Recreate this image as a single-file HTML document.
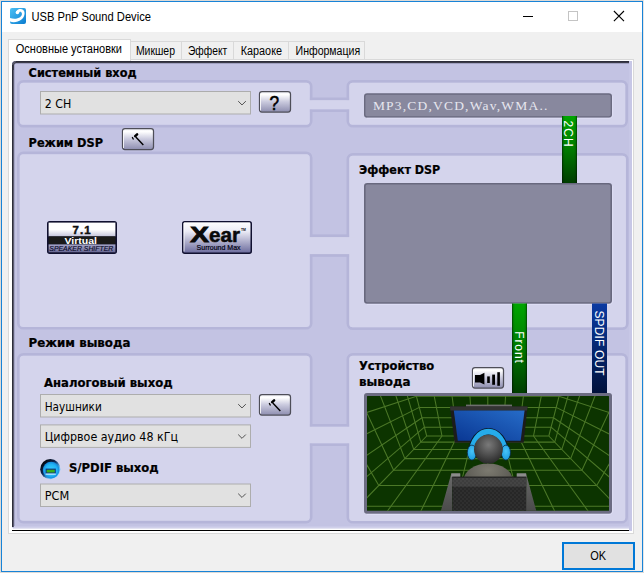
<!DOCTYPE html>
<html><head><meta charset="utf-8"><title>USB PnP Sound Device</title>
<style>
html,body{margin:0;padding:0;background:#f0f0f0;}
body{width:644px;height:573px;overflow:hidden;position:relative;font-family:"Liberation Sans",sans-serif;}
#win{position:absolute;left:0;top:0;width:644px;height:573px;background:#f0f0f0;overflow:hidden}
.edge{position:absolute;background:#1883d7}
#title{position:absolute;left:2px;top:2px;width:640px;height:30px;background:#fff}
#ttext{position:absolute;left:31px;top:9px;font-size:12px;line-height:14px;color:#000;white-space:nowrap;letter-spacing:0.1px}
.tab{position:absolute;top:41px;height:18px;box-sizing:border-box;border:1px solid #d9d9d9;border-bottom:none;border-left:none;background:#f0f0f0;font-size:12px;line-height:17px;color:#000;text-align:center;white-space:nowrap}
#tab0{left:8px;top:39px;width:123px;height:22px;background:#fff;border-left:1px solid #d9d9d9;line-height:19px}
#page{position:absolute;left:8px;top:59px;width:626px;height:475px;box-sizing:border-box;border:1px solid #d9d9d9;background:#fff}
#ok{position:absolute;left:562px;top:542px;width:73px;height:28px;box-sizing:border-box;border:2px solid #0078d7;background:#e1e1e1;font-size:12px;line-height:24px;text-align:center;color:#000}
svg text.bold{font-family:"DejaVu Sans Condensed","DejaVu Sans","Liberation Sans",sans-serif;font-weight:bold;font-size:13px;fill:#000;stroke:#000;stroke-width:0.22px}
svg text.reg{font-family:"DejaVu Sans Condensed","DejaVu Sans","Liberation Sans",sans-serif;font-size:13px;fill:#000}
svg .ui text{font-family:"Liberation Sans",sans-serif;font-size:12px;fill:#000}
svg text.vert{font-family:"Liberation Sans",sans-serif;font-size:12px;fill:#fff}
</style></head>
<body>
<div id="win">
<div id="title"></div>
<svg width="16" height="16" viewBox="0 0 16 16" style="position:absolute;left:10px;top:8px">
<defs><linearGradient id="ig" x1="0" y1="0" x2="1" y2="1"><stop offset="0" stop-color="#4cc0f4"/><stop offset="1" stop-color="#0a7cd0"/></linearGradient></defs>
<rect x="0" y="0" width="16" height="16" rx="2" fill="url(#ig)"/>
<path d="M0 13.6 C6 15.6 14.6 12.4 14.6 5 C14.6 1.6 11.6 0.5 9.4 1 C7.6 1.5 6.2 2.8 5.9 4.2 L8.6 5.2 C9.2 3.2 11.4 3 11.9 5.4 C12.4 8.8 7 12.2 0 10 Z" fill="#fff"/>
<circle cx="7.4" cy="4.5" r="1.75" fill="#fff"/>
</svg>
<svg width="140" height="30" viewBox="0 0 140 30" style="position:absolute;left:500px;top:2px">
<path d="M23 14.5 H33" stroke="#000" stroke-width="1"/>
<rect x="68.5" y="9.5" width="9" height="9" fill="none" stroke="#c4c4c4" stroke-width="1"/>
<path d="M113.9 9 L124 19.2 M124 9 L113.9 19.2" stroke="#000" stroke-width="1.1"/>
</svg>
<div id="page"></div>
<div class="tab" id="tab0"></div>
<div class="tab" style="left:131px;width:51px"></div>
<div class="tab" style="left:182px;width:52px"></div>
<div class="tab" style="left:234px;width:55px"></div>
<div class="tab" style="left:289px;width:76px"></div>
<div id="ok"></div>
<svg width="644" height="573" viewBox="0 0 644 573" style="position:absolute;left:0;top:0">
<defs>
<linearGradient id="btng" x1="0" y1="0" x2="0" y2="1"><stop offset="0" stop-color="#f0f0f6"/><stop offset="0.15" stop-color="#ffffff"/><stop offset="0.5" stop-color="#cacade"/><stop offset="1" stop-color="#8e8eb0"/></linearGradient>
<linearGradient id="grn" x1="0" y1="0" x2="0" y2="1"><stop offset="0" stop-color="#00a600"/><stop offset="0.5" stop-color="#007a00"/><stop offset="1" stop-color="#003c00"/></linearGradient>
<linearGradient id="grnh" x1="0" y1="0" x2="1" y2="0"><stop offset="0" stop-color="#000" stop-opacity="0.6"/><stop offset="0.09" stop-color="#000" stop-opacity="0.15"/><stop offset="0.2" stop-color="#000" stop-opacity="0"/><stop offset="0.8" stop-color="#000" stop-opacity="0"/><stop offset="0.91" stop-color="#000" stop-opacity="0.15"/><stop offset="1" stop-color="#000" stop-opacity="0.55"/></linearGradient>
<linearGradient id="blu" x1="0" y1="0" x2="0" y2="1"><stop offset="0" stop-color="#0b3aa2"/><stop offset="0.5" stop-color="#052670"/><stop offset="1" stop-color="#00103a"/></linearGradient>
<linearGradient id="scr" x1="0" y1="1" x2="1" y2="0"><stop offset="0" stop-color="#093692"/><stop offset="1" stop-color="#266cc8"/></linearGradient>
<radialGradient id="head" cx="0.5" cy="0.35" r="0.65"><stop offset="0" stop-color="#7a7a7a"/><stop offset="1" stop-color="#2a2a2a"/></radialGradient>
<radialGradient id="body" cx="0.5" cy="0.2" r="0.8"><stop offset="0" stop-color="#7c7a70"/><stop offset="1" stop-color="#4a4944"/></radialGradient>
<linearGradient id="logo2" x1="0" y1="0" x2="0" y2="1"><stop offset="0" stop-color="#ffffff"/><stop offset="0.3" stop-color="#ececf6"/><stop offset="1" stop-color="#6a6a9c"/></linearGradient>
<linearGradient id="logo1a" x1="0" y1="0" x2="0" y2="1"><stop offset="0" stop-color="#ffffff"/><stop offset="0.5" stop-color="#ffffff"/><stop offset="1" stop-color="#c4c4dc"/></linearGradient>
<linearGradient id="logo1b" x1="0" y1="0" x2="0" y2="1"><stop offset="0" stop-color="#a6a6ca"/><stop offset="1" stop-color="#686892"/></linearGradient>
<radialGradient id="spd" cx="0.5" cy="0.5" r="0.5"><stop offset="0" stop-color="#34d4ff"/><stop offset="0.7" stop-color="#22b4f4"/><stop offset="1" stop-color="#1488dc"/></radialGradient>
<linearGradient id="spdo" x1="0.15" y1="0.15" x2="0.85" y2="0.85"><stop offset="0" stop-color="#04060c"/><stop offset="0.4" stop-color="#0a2a5a"/><stop offset="0.75" stop-color="#58b8f0"/><stop offset="1" stop-color="#a0dcff"/></linearGradient>
<linearGradient id="rail" x1="0" y1="0" x2="0" y2="1"><stop offset="0" stop-color="#6a6a6a"/><stop offset="1" stop-color="#4a4a4a"/></linearGradient>
<pattern id="chk" width="4" height="4" patternUnits="userSpaceOnUse"><rect x="0" y="0" width="2" height="2" fill="#fff" opacity="0.035"/><rect x="2" y="2" width="2" height="2" fill="#fff" opacity="0.035"/></pattern>
<radialGradient id="cup" cx="0.5" cy="0.4" r="0.6"><stop offset="0" stop-color="#48c4f8"/><stop offset="1" stop-color="#1c9ce0"/></radialGradient>
<clipPath id="roomclip"><rect x="367" y="396" width="242" height="114.8" rx="0.5"/></clipPath>
</defs>

<!-- lavender panel -->
<path d="M15 61 H632 V531 H629 V529 H15 Q12 529 12 526 V64 Q12 61 15 61 Z" fill="#c3c3e3"/>
<rect x="629" y="61" width="3" height="470" fill="#c7c7e6"/>
<rect x="14" y="526" width="615" height="1" fill="#c9c9e7"/>
<rect x="14" y="527" width="615" height="1" fill="#d0d0ea"/>
<rect x="13" y="528" width="616" height="1" fill="#e2e2f1"/>
<!-- sunken border -->
<rect x="14" y="64" width="1" height="462" fill="#a6a6c8"/>
<rect x="15" y="63" width="614" height="1" fill="#a0a0c0"/>
<path d="M13.5 527 V65 Q13.5 62.5 16 62.5 H629" fill="none" stroke="#5a5a70" stroke-width="1"/>
<path d="M12.5 527 V64.5 Q12.5 61.5 15.5 61.5 H629" fill="none" stroke="#2c2c3a" stroke-width="1"/>
<path d="M13.5 70 V65 Q13.5 62.5 16 62.5 H629" fill="none" stroke="#3a3a48" stroke-width="1"/>
<rect x="12" y="530" width="617" height="1" fill="#000"/>

<!-- groups -->
<rect x="18.4" y="81.4" width="292.7" height="44.7" rx="5" fill="none" stroke="#b5b5d9" stroke-width="2.8"/>
<rect x="347.9" y="81.4" width="278.7" height="44.7" rx="5" fill="none" stroke="#b5b5d9" stroke-width="2.8"/>
<rect x="306.4" y="98.9" width="47.2" height="11.7" rx="0" fill="none" stroke="#b5b5d9" stroke-width="2.8"/>
<rect x="19.7" y="82.7" width="290.1" height="42.1" rx="3.5" fill="#d4d4ec"/>
<rect x="349.2" y="82.7" width="276.1" height="42.1" rx="3.5" fill="#d4d4ec"/>
<rect x="305" y="100.2" width="50" height="9.1" fill="#d4d4ec"/>
<rect x="18.4" y="152.9" width="292.7" height="175.3" rx="5" fill="none" stroke="#b5b5d9" stroke-width="2.8"/>
<rect x="347.9" y="154.4" width="279.3" height="174.2" rx="5" fill="none" stroke="#b5b5d9" stroke-width="2.8"/>
<rect x="306.4" y="235.8" width="47.2" height="19.600000000000005" rx="0" fill="none" stroke="#b5b5d9" stroke-width="2.8"/>
<rect x="19.7" y="154.2" width="290.1" height="172.70000000000002" rx="3.5" fill="#d4d4ec"/>
<rect x="349.2" y="155.7" width="276.70000000000005" height="171.6" rx="3.5" fill="#d4d4ec"/>
<rect x="305" y="237.1" width="50" height="17.000000000000007" fill="#d4d4ec"/>
<rect x="18.4" y="354.4" width="292.7" height="167.59999999999997" rx="5" fill="none" stroke="#b5b5d9" stroke-width="2.8"/>
<rect x="347.9" y="354.4" width="278.7" height="167.8" rx="5" fill="none" stroke="#b5b5d9" stroke-width="2.8"/>
<rect x="306.4" y="425.4" width="47.2" height="19.2" rx="0" fill="none" stroke="#b5b5d9" stroke-width="2.8"/>
<rect x="19.7" y="355.7" width="290.1" height="164.99999999999997" rx="3.5" fill="#d4d4ec"/>
<rect x="349.2" y="355.7" width="276.1" height="165.20000000000002" rx="3.5" fill="#d4d4ec"/>
<rect x="305" y="426.7" width="50" height="16.6" fill="#d4d4ec"/>

<!-- section 1 -->
<text x="28.6" y="77" class="bold" textLength="108" lengthAdjust="spacingAndGlyphs">Системный вход</text>
<rect x="40.5" y="91.5" width="210" height="22.5" fill="#e1e1e1" stroke="#adadad"/>
<path d="M238.2 101.15 l3.8 3.8 l3.8 -3.8" fill="none" stroke="#505050" stroke-width="1"/>
<text x="44.7" y="107.9" class="reg" textLength="26.5" lengthAdjust="spacingAndGlyphs">2 CH</text>
<g transform="translate(259,91)">
<rect x="0.5" y="0.5" width="31" height="20.5" rx="2.5" fill="url(#btng)" stroke="#4e4e58" stroke-width="1.25"/>
<path d="M1.5 19.5 V2.5" fill="none" stroke="#ffffff" stroke-width="1" opacity="0.85"/>
<text x="15.2" y="18.6" font-family="'Liberation Sans',sans-serif" font-size="20" text-anchor="middle" fill="#000" stroke="#000" stroke-width="0.55" textLength="9.6" lengthAdjust="spacingAndGlyphs">?</text></g>
<path d="M366.5 129.5 H613 V305 H366.5" fill="none" stroke="none"/><rect x="364.7" y="94" width="246.6" height="23" rx="2.5" fill="#88889e" stroke="#6a6a80" stroke-width="1.4"/><path d="M367 118.2 H610.5 L612.7 116 V96" fill="none" stroke="#e2e2f8" stroke-width="0.9" opacity="0.8"/>
<text x="372.9" y="110.4" font-family="'Liberation Serif',serif" font-size="13.5" fill="#e6e6ee" textLength="174.5" lengthAdjust="spacing">MP3,CD,VCD,Wav,WMA..</text>

<!-- green 2CH -->
<g><rect x="562" y="116" width="15" height="67.5" fill="url(#grn)"/><rect x="562" y="116" width="15" height="67.5" fill="url(#grnh)"/>
<text transform="translate(564.2,120.6) rotate(90)" class="vert" textLength="26" lengthAdjust="spacing">2CH</text></g>

<!-- section 2 -->
<text x="28.6" y="147" class="bold" textLength="74.4" lengthAdjust="spacingAndGlyphs">Режим DSP</text>
<g transform="translate(122,128)">
<rect x="0.5" y="0.5" width="31" height="21" rx="2.5" fill="url(#btng)" stroke="#4e4e58" stroke-width="1.25"/>
<path d="M1.5 20 V2.5" fill="none" stroke="#ffffff" stroke-width="1" opacity="0.85"/>
<path d="M21.3 17.1 L13.8 9" stroke="#000" stroke-width="1.4" fill="none"/>
<path d="M13.2 8.2 L15.1 6.4" stroke="#000" stroke-width="2.5" fill="none" stroke-linecap="round"/>
<path d="M10.2 9.1 L11.5 11.5" stroke="#000" stroke-width="1.25" fill="none"/></g>
<text x="359" y="174" class="bold" textLength="81.3" lengthAdjust="spacingAndGlyphs">Эффект DSP</text>
<rect x="364.8" y="183.8" width="246.4" height="119.2" rx="2.5" fill="#88889e" stroke="#68687e" stroke-width="1.6"/><path d="M367 304.4 H610.5 L612.7 302 V186" fill="none" stroke="#e2e2f8" stroke-width="0.9" opacity="0.8"/>

<!-- logo 1 -->
<g transform="translate(47,221)">
<rect x="0.75" y="0.75" width="68.5" height="31.5" rx="2" fill="#101028" stroke="#101030" stroke-width="1.5"/>
<rect x="1.6" y="1.6" width="66.8" height="13.8" fill="url(#logo1a)"/>
<rect x="1.6" y="15.4" width="66.8" height="8" fill="#1a1a1a"/>
<rect x="1.6" y="23.4" width="66.8" height="7.9" fill="url(#logo1b)"/>
<text x="34.6" y="13" font-family="'Liberation Sans',sans-serif" font-weight="bold" font-size="11.5" text-anchor="middle" fill="#111" stroke="#111" stroke-width="0.45" textLength="18" lengthAdjust="spacing">7.1</text>
<text x="17.4" y="22.6" font-family="'Liberation Sans',sans-serif" font-weight="bold" font-size="9.4" fill="#fff" textLength="32.6" lengthAdjust="spacingAndGlyphs">Virtual</text>
<text x="2.3" y="30" font-family="'Liberation Sans',sans-serif" font-style="italic" font-size="7.8" fill="#0a0a2a" stroke="#0a0a2a" stroke-width="0.15" textLength="64" lengthAdjust="spacingAndGlyphs">SPEAKER SHIFTER</text>
</g>
<!-- logo 2 -->
<g transform="translate(182,221)">
<rect x="0.75" y="0.75" width="68.5" height="31.5" rx="2" fill="url(#logo2)" stroke="#101030" stroke-width="1.5"/>
<path d="M2 30.5 V2 H68" fill="none" stroke="#fff" stroke-width="1" opacity="0.8"/>
<text x="8.2" y="20.7" font-family="'Liberation Sans',sans-serif" font-weight="bold" font-size="22" fill="#0a0a0a" stroke="#0a0a0a" stroke-width="0.9" textLength="18.6" lengthAdjust="spacingAndGlyphs">X</text>
<text x="27" y="20.7" font-family="'Liberation Sans',sans-serif" font-weight="bold" font-size="19.5" fill="#0a0a0a" stroke="#0a0a0a" stroke-width="0.5" textLength="31" lengthAdjust="spacingAndGlyphs">ear</text>
<text x="59" y="10.2" font-family="'Liberation Sans',sans-serif" font-weight="bold" font-size="3.4" fill="#0a0a0a">TM</text>
<text x="14.6" y="29.3" font-family="'Liberation Sans',sans-serif" font-size="8" fill="#000010" stroke="#000010" stroke-width="0.2" textLength="44" lengthAdjust="spacingAndGlyphs">Surround Max</text>
</g>

<!-- bars -->
<g><rect x="512" y="303.5" width="15" height="90" fill="url(#grn)"/><rect x="512" y="303.5" width="15" height="90" fill="url(#grnh)"/>
<text transform="translate(515,331.3) rotate(90)" class="vert" textLength="31.5" lengthAdjust="spacing">Front</text></g>
<g><rect x="592" y="303.5" width="15" height="90" fill="url(#blu)"/>
<text transform="translate(594.5,310.4) rotate(90)" class="vert" textLength="65.3" lengthAdjust="spacing">SPDIF OUT</text></g>

<!-- section 3 -->
<text x="28.6" y="347" class="bold" textLength="101.9" lengthAdjust="spacingAndGlyphs">Режим вывода</text>
<text x="44" y="386.8" class="bold" textLength="128.6" lengthAdjust="spacingAndGlyphs">Аналоговый выход</text>
<rect x="40.5" y="394.5" width="210" height="22.5" fill="#e1e1e1" stroke="#adadad"/>
<path d="M238.2 404.15 l3.8 3.8 l3.8 -3.8" fill="none" stroke="#505050" stroke-width="1"/>
<text x="44.7" y="410.9" class="reg" textLength="57.1" lengthAdjust="spacingAndGlyphs">Наушники</text>
<g transform="translate(259,394)">
<rect x="0.5" y="0.5" width="31" height="20.5" rx="2.5" fill="url(#btng)" stroke="#4e4e58" stroke-width="1.25"/>
<path d="M1.5 19.5 V2.5" fill="none" stroke="#ffffff" stroke-width="1" opacity="0.85"/>
<path d="M21.3 17.1 L13.8 9" stroke="#000" stroke-width="1.4" fill="none"/>
<path d="M13.2 8.2 L15.1 6.4" stroke="#000" stroke-width="2.5" fill="none" stroke-linecap="round"/>
<path d="M10.2 9.1 L11.5 11.5" stroke="#000" stroke-width="1.25" fill="none"/></g>
<rect x="40.5" y="424.9" width="210" height="22.5" fill="#e1e1e1" stroke="#adadad"/>
<path d="M238.2 434.54999999999995 l3.8 3.8 l3.8 -3.8" fill="none" stroke="#505050" stroke-width="1"/>
<text x="44.7" y="441.29999999999995" class="reg" textLength="133.4" lengthAdjust="spacingAndGlyphs">Цифрвое аудио 48 кГц</text>
<!-- spdif icon -->
<circle cx="50.3" cy="469.2" r="10.1" fill="url(#spdo)"/>
<circle cx="51.1" cy="470.1" r="8.3" fill="url(#spd)"/>
<rect x="45.6" y="468.6" width="10.2" height="5" fill="#10308a"/>
<rect x="46.6" y="469.7" width="8.2" height="2.8" fill="#38b018"/>
<rect x="45.6" y="473.6" width="10.2" height="1" fill="#e8f8ff"/>
<text x="68.9" y="472.4" class="bold" textLength="89.7" lengthAdjust="spacingAndGlyphs">S/PDIF выход</text>
<rect x="40.5" y="484.0" width="210" height="22.5" fill="#e1e1e1" stroke="#adadad"/>
<path d="M238.2 493.65 l3.8 3.8 l3.8 -3.8" fill="none" stroke="#505050" stroke-width="1"/>
<text x="44.7" y="500.4" class="reg" textLength="24.5" lengthAdjust="spacingAndGlyphs">PCM</text>

<text x="358.9" y="370.2" class="bold" textLength="75.3" lengthAdjust="spacingAndGlyphs">Устройство</text>
<text x="358.9" y="385.6" class="bold" textLength="51.7" lengthAdjust="spacingAndGlyphs">вывода</text>
<g transform="translate(472,367)">
<rect x="0.5" y="0.5" width="31" height="20.5" rx="2.5" fill="url(#btng)" stroke="#4e4e58" stroke-width="1.25"/>
<path d="M1.5 19.5 V2.5" fill="none" stroke="#ffffff" stroke-width="1" opacity="0.85"/>
<path d="M3 8 H8 L12.4 5.8 V17.6 L8 15.5 H3 Z" fill="#000"/>
<rect x="15.2" y="9.4" width="2.6" height="6.6" fill="#000"/>
<rect x="20.2" y="7.6" width="2.8" height="10.2" fill="#000"/>
<rect x="25.3" y="5.2" width="2.6" height="13.6" fill="#000"/></g>

<!-- room image -->
<rect x="364" y="393" width="248" height="120.8" rx="3" fill="#6c6c82"/><path d="M367 514.4 H610.5 L612.7 512 V396" fill="none" stroke="#e2e2f8" stroke-width="0.9" opacity="0.8"/>
<rect x="367" y="396" width="242" height="114.8" rx="0.5" fill="#0c3400"/>
<g clip-path="url(#roomclip)">
<g stroke="#4c7827" stroke-width="1.05" fill="none">
<line x1="426.7" y1="436.0" x2="243.6" y2="625.0"/>
<line x1="442.0" y1="436.0" x2="304.6" y2="625.0"/>
<line x1="457.2" y1="436.0" x2="365.7" y2="625.0"/>
<line x1="472.5" y1="436.0" x2="426.7" y2="625.0"/>
<line x1="487.8" y1="436.0" x2="487.8" y2="625.0"/>
<line x1="503.0" y1="436.0" x2="548.8" y2="625.0"/>
<line x1="518.3" y1="436.0" x2="609.8" y2="625.0"/>
<line x1="533.5" y1="436.0" x2="670.9" y2="625.0"/>
<line x1="548.8" y1="436.0" x2="731.9" y2="625.0"/>
<line x1="426.7" y1="436.0" x2="548.8" y2="436.0"/>
<line x1="420.8" y1="442.1" x2="554.7" y2="442.1"/>
<line x1="413.7" y1="449.4" x2="561.8" y2="449.4"/>
<line x1="404.8" y1="458.6" x2="570.7" y2="458.6"/>
<line x1="393.6" y1="470.2" x2="581.9" y2="470.2"/>
<line x1="378.8" y1="485.4" x2="596.7" y2="485.4"/>
<line x1="358.6" y1="506.3" x2="616.9" y2="506.3"/>
<line x1="329.1" y1="536.8" x2="646.4" y2="536.8"/>
<line x1="426.7" y1="436.0" x2="412.2" y2="380.0"/>
<line x1="442.0" y1="436.0" x2="431.1" y2="380.0"/>
<line x1="457.2" y1="436.0" x2="450.0" y2="380.0"/>
<line x1="472.5" y1="436.0" x2="468.9" y2="380.0"/>
<line x1="487.8" y1="436.0" x2="487.8" y2="380.0"/>
<line x1="503.0" y1="436.0" x2="506.6" y2="380.0"/>
<line x1="518.3" y1="436.0" x2="525.5" y2="380.0"/>
<line x1="533.5" y1="436.0" x2="544.4" y2="380.0"/>
<line x1="548.8" y1="436.0" x2="563.3" y2="380.0"/>
<line x1="424.4" y1="427.2" x2="551.1" y2="427.2"/>
<line x1="422.0" y1="417.7" x2="553.5" y2="417.7"/>
<line x1="419.3" y1="407.4" x2="556.2" y2="407.4"/>
<line x1="416.4" y1="396.3" x2="559.1" y2="396.3"/>
<line x1="413.3" y1="384.1" x2="562.2" y2="384.1"/>
<line x1="409.9" y1="370.9" x2="565.6" y2="370.9"/>
<line x1="424.4" y1="427.2" x2="234.5" y2="589.7"/>
<line x1="422.0" y1="417.7" x2="224.6" y2="551.7"/>
<line x1="419.3" y1="407.4" x2="214.0" y2="510.6"/>
<line x1="416.4" y1="396.3" x2="202.5" y2="466.0"/>
<line x1="413.3" y1="384.1" x2="189.9" y2="417.5"/>
<line x1="409.9" y1="370.9" x2="176.2" y2="364.6"/>
<line x1="420.8" y1="442.1" x2="380.7" y2="304.1"/>
<line x1="413.7" y1="449.4" x2="369.3" y2="315.9"/>
<line x1="404.8" y1="458.6" x2="355.1" y2="330.5"/>
<line x1="393.6" y1="470.2" x2="337.1" y2="349.1"/>
<line x1="378.8" y1="485.4" x2="313.5" y2="373.4"/>
<line x1="358.6" y1="506.3" x2="281.1" y2="406.9"/>
<line x1="329.1" y1="536.8" x2="233.9" y2="455.6"/>
<line x1="551.1" y1="427.2" x2="741.0" y2="589.7"/>
<line x1="553.5" y1="417.7" x2="750.9" y2="551.7"/>
<line x1="556.2" y1="407.4" x2="761.5" y2="510.6"/>
<line x1="559.1" y1="396.3" x2="773.0" y2="466.0"/>
<line x1="562.2" y1="384.1" x2="785.6" y2="417.5"/>
<line x1="565.6" y1="370.9" x2="799.3" y2="364.6"/>
<line x1="554.7" y1="442.1" x2="594.8" y2="304.1"/>
<line x1="561.8" y1="449.4" x2="606.2" y2="315.9"/>
<line x1="570.7" y1="458.6" x2="620.4" y2="330.5"/>
<line x1="581.9" y1="470.2" x2="638.4" y2="349.1"/>
<line x1="596.7" y1="485.4" x2="662.0" y2="373.4"/>
<line x1="616.9" y1="506.3" x2="694.4" y2="406.9"/>
<line x1="646.4" y1="536.8" x2="741.6" y2="455.6"/>
</g>
<!-- monitor -->
<rect x="466" y="404.6" width="46" height="2.4" fill="#6e6e6e"/>
<path d="M450 406.5 H527.5 L523.7 442.8 H454.6 Z" fill="#1c1c1c"/>
<path d="M450 406.5 H527.5 L527.1 410.6 H450.4 Z" fill="#333333"/>
<path d="M453.8 410.6 H524.6 L520.6 440.8 H457.8 Z" fill="url(#scr)"/>
<!-- body -->
<ellipse cx="488.2" cy="480" rx="24.5" ry="16.4" fill="url(#body)"/>
<!-- headphone band -->
<path d="M471.9 453 A16.5 21.4 0 0 1 504.9 453" fill="none" stroke="#081828" stroke-width="7.4"/>
<path d="M471.9 453 A16.5 21.4 0 0 1 504.9 453" fill="none" stroke="#25aceb" stroke-width="5.6"/>
<!-- cups -->
<ellipse cx="471.9" cy="452.6" rx="4.6" ry="7.5" fill="url(#cup)" stroke="#0a2848" stroke-width="0.8"/>
<ellipse cx="505.9" cy="452.6" rx="4.6" ry="7.5" fill="url(#cup)" stroke="#0a2848" stroke-width="0.8"/>
<!-- head -->
<circle cx="488.4" cy="449.2" r="14.4" fill="url(#head)"/>
<!-- chair -->
<path d="M451.3 473.4 H460.2 V477.5 H452 L452.2 512 H440.6 Z" fill="url(#rail)"/>
<path d="M516.8 473.4 H526.1 L536.6 512 H526 L526.2 477.5 H516.8 Z" fill="url(#rail)"/>
<rect x="451.3" y="473.4" width="8.9" height="3.8" fill="#8c8c8c"/>
<rect x="516.8" y="473.4" width="9.3" height="3.8" fill="#8c8c8c"/>
<rect x="452.2" y="477" width="74" height="35" fill="#272727"/>
<rect x="452.2" y="477" width="74" height="35" fill="url(#chk)"/>
<rect x="452.2" y="477" width="74" height="9.7" fill="#3d3d3d"/>
<rect x="452.2" y="477" width="74" height="9.7" fill="url(#chk)"/>
<rect x="452.2" y="476.6" width="74" height="1" fill="#1a1a1a"/>
</g>
<!-- chrome text -->
<g class="ui">
<text x="31.4" y="21" textLength="119.6" lengthAdjust="spacingAndGlyphs">USB PnP Sound Device</text>
<text x="15.8" y="52.8" textLength="106.2" lengthAdjust="spacingAndGlyphs">Основные установки</text>
<text x="135.9" y="54.6" textLength="39.1" lengthAdjust="spacingAndGlyphs">Микшер</text>
<text x="188" y="54.6" textLength="39.2" lengthAdjust="spacingAndGlyphs">Эффект</text>
<text x="240.8" y="54.6" textLength="41.2" lengthAdjust="spacingAndGlyphs">Караоке</text>
<text x="295.6" y="54.6" textLength="64.5" lengthAdjust="spacingAndGlyphs">Информация</text>
<text x="590.3" y="560.4" textLength="15.8" lengthAdjust="spacingAndGlyphs">OK</text>
</g>
</svg>
<div class="edge" style="left:1px;top:1px;width:642px;height:1px"></div>
<div class="edge" style="left:1px;top:571px;width:642px;height:1px"></div>
<div class="edge" style="left:1px;top:1px;width:1px;height:571px"></div>
<div class="edge" style="left:642px;top:1px;width:1px;height:571px"></div>
<div style="position:absolute;left:0;top:0;width:644px;height:1px;background:#dddad6"></div>
<div style="position:absolute;left:0;top:0;width:1px;height:573px;background:#dddad6"></div>
<div style="position:absolute;left:643px;top:0;width:1px;height:573px;background:#e6e6e6"></div>
<div style="position:absolute;left:0;top:572px;width:644px;height:1px;background:#dddad6"></div>
</div>
</body></html>
